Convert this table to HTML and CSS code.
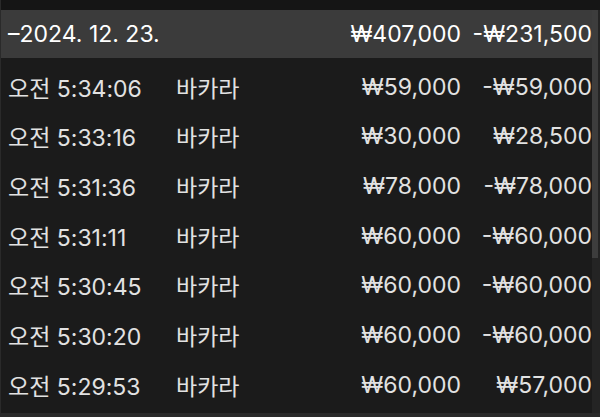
FILE: index.html
```html
<!DOCTYPE html>
<html lang="ko">
<head>
<meta charset="utf-8">
<link rel="stylesheet" href="styles.css">
</head>
<body>
<div class="frame">
  <div class="list">
    <div class="row header">
      <span class="time">–2024. 12. 23.</span>
      <span class="game"></span>
      <span class="amt">₩407,000</span>
      <span class="res">-₩231,500</span>
    </div>
    <div class="row"><span class="time">오전 5:34:06</span><span class="game">바카라</span><span class="amt">₩59,000</span><span class="res">-₩59,000</span></div>
    <div class="row"><span class="time">오전 5:33:16</span><span class="game">바카라</span><span class="amt">₩30,000</span><span class="res">₩28,500</span></div>
    <div class="row"><span class="time">오전 5:31:36</span><span class="game">바카라</span><span class="amt">₩78,000</span><span class="res">-₩78,000</span></div>
    <div class="row"><span class="time">오전 5:31:11</span><span class="game">바카라</span><span class="amt">₩60,000</span><span class="res">-₩60,000</span></div>
    <div class="row"><span class="time">오전 5:30:45</span><span class="game">바카라</span><span class="amt">₩60,000</span><span class="res">-₩60,000</span></div>
    <div class="row"><span class="time">오전 5:30:20</span><span class="game">바카라</span><span class="amt">₩60,000</span><span class="res">-₩60,000</span></div>
    <div class="row"><span class="time">오전 5:29:53</span><span class="game">바카라</span><span class="amt">₩60,000</span><span class="res">₩57,000</span></div>
  </div>
  <div class="scrollbar"><div class="thumb"></div></div>
</div>
</body>
</html>
```
FILE: styles.css
```css
html, body {
  margin: 0;
  padding: 0;
  background: #1b1b1b;
}
.frame {
  width: 600px;
  height: 417px;
  box-sizing: border-box;
  padding-top: 10px;
  border-left: 1px solid #2a2a2a;
  border-bottom: 4px solid #2a2a2a;
  background: #1b1b1b;
  position: relative;
  overflow: hidden;
  font-family: "Inter", "Noto Sans CJK KR", sans-serif;
  font-size: 23px;
  color: #e2e2e2;
}
.frame::before {
  content: "";
  position: absolute;
  left: 0;
  right: 0;
  top: 0;
  height: 10px;
  background: #151515;
}
.list {
  width: 591px;
  display: flex;
  flex-direction: column;
}
.row {
  display: grid;
  grid-template-columns: 168px 1fr 142px 131px;
  align-items: center;
  height: 49.67px;
  padding-left: 7px;
  white-space: nowrap;
}
.header {
  height: 48px;
  margin-bottom: 4px;
  background: #3b3b3b;
  color: #ffffff;
}
.amt, .res {
  text-align: right;
}
.scrollbar {
  position: absolute;
  top: 10px;
  right: 0;
  width: 8px;
  bottom: 0;
  background: #242424;
}
.thumb {
  width: 6px;
  height: 248px;
  background: #3d3d3d;
}
```
